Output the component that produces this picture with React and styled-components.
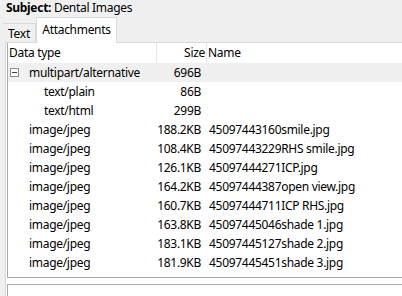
import React from 'react';
import styled, { createGlobalStyle } from 'styled-components';

const GlobalStyle = createGlobalStyle`
  html, body {
    margin: 0;
    padding: 0;
    background: #f0f0f0;
    overflow: hidden;
  }
  body {
    font-family: 'Noto Sans', 'Open Sans', sans-serif;
    font-size: 12px;
    letter-spacing: -0.3px;
    color: #000000;
  }
`;

const attachments = [
  { type: 'multipart/alternative', size: '696B', name: '', level: 0, toggle: true, hover: true },
  { type: 'text/plain', size: '86B', name: '', level: 1 },
  { type: 'text/html', size: '299B', name: '', level: 1 },
  { type: 'image/jpeg', size: '188.2KB', name: '45097443160smile.jpg', level: 0 },
  { type: 'image/jpeg', size: '108.4KB', name: '45097443229RHS smile.jpg', level: 0 },
  { type: 'image/jpeg', size: '126.1KB', name: '45097444271ICP.jpg', level: 0 },
  { type: 'image/jpeg', size: '164.2KB', name: '45097444387open view.jpg', level: 0 },
  { type: 'image/jpeg', size: '160.7KB', name: '45097444711ICP RHS.jpg', level: 0 },
  { type: 'image/jpeg', size: '163.8KB', name: '45097445046shade 1.jpg', level: 0 },
  { type: 'image/jpeg', size: '183.1KB', name: '45097445127shade 2.jpg', level: 0 },
  { type: 'image/jpeg', size: '181.9KB', name: '45097445451shade 3.jpg', level: 0 },
];

const App = function () {
  return (
    <Window>
      <GlobalStyle />
      <Subject>
        <b>Subject:</b> Dental Images
      </Subject>

      <TabBar>
        <Tab $width={33}>Text</Tab>
        <Tab $width={81} $active>Attachments</Tab>
      </TabBar>

      <Panel>
        <List>
          <HeadRow>
            <HeadCell>Data type</HeadCell>
            <HeadCell $align="right">Size</HeadCell>
            <HeadCell $last>Name</HeadCell>
          </HeadRow>

          {attachments.map((item, i) => (
            <Row key={i} $hover={item.hover}>
              <TypeCell $level={item.level}>
                <Expander>
                  {item.toggle && <ToggleBox />}
                </Expander>
                {item.type}
              </TypeCell>
              <SizeCell>{item.size}</SizeCell>
              <NameCell>{item.name}</NameCell>
            </Row>
          ))}
        </List>

        <Preview />
      </Panel>
    </Window>
  );
};

export default App;

const Window = styled.div`
  width: 402px;
  height: 296px;
  display: flex;
  flex-direction: column;
  overflow: hidden;
`;

const Subject = styled.div`
  height: 17px;
  line-height: 15px;
  padding-left: 6px;
  white-space: nowrap;

  b {
    font-weight: 700;
  }
`;

const TabBar = styled.div`
  height: 25px;
  display: flex;
  align-items: flex-end;
  padding-left: 3px;
`;

const Tab = styled.div`
  position: relative;
  z-index: ${(p) => (p.$active ? 1 : 0)};
  box-sizing: border-box;
  width: ${(p) => p.$width}px;
  height: ${(p) => (p.$active ? 26 : 19)}px;
  margin-bottom: ${(p) => (p.$active ? -1 : 0)}px;
  border: 1px solid #d9d9d9;
  border-bottom: none;
  border-left: ${(p) => (p.$active ? '1px solid #d9d9d9' : 'none')};
  background: ${(p) => (p.$active ? '#ffffff' : '#f0f0f0')};
  display: flex;
  align-items: center;
  justify-content: center;
  padding-bottom: ${(p) => (p.$active ? 3 : 0)}px;
  white-space: nowrap;
`;

const Panel = styled.div`
  flex: 1;
  margin-left: 5px;
  border-left: 1px solid #d9d9d9;
  border-top: 1px solid #d9d9d9;
  background: #ffffff;
  padding-left: 1px;
  display: flex;
  flex-direction: column;
`;

const List = styled.div`
  height: 234px;
  border-left: 1px solid #a9a9a9;
  border-bottom: 1px solid #a9a9a9;
  background: #ffffff;
`;

const columns = '149px 50px 1fr';

const HeadRow = styled.div`
  display: grid;
  grid-template-columns: ${columns};
  height: 20px;
`;

const HeadCell = styled.div`
  border-right: ${(p) => (p.$last ? 'none' : '1px solid #e5e5e5')};
  line-height: 19px;
  padding: 0 1px;
  text-align: ${(p) => p.$align || 'left'};
  white-space: nowrap;
`;

const Row = styled.div`
  display: grid;
  grid-template-columns: ${columns};
  height: 19px;
  line-height: 19px;
  background: ${(p) => (p.$hover ? '#f0f0f0' : '#ffffff')};
  white-space: nowrap;
`;

const TypeCell = styled.div`
  display: flex;
  align-items: center;
  padding-left: ${(p) => 2 + p.$level * 15}px;
`;

const Expander = styled.span`
  width: 19px;
  flex: none;
  display: flex;
  align-items: center;
`;

const ToggleBox = styled.span`
  position: relative;
  box-sizing: border-box;
  width: 9px;
  height: 9px;
  border: 1px solid #8c8c8c;
  background: #ffffff;

  &::after {
    content: '';
    position: absolute;
    left: 1px;
    right: 1px;
    top: 3px;
    height: 1px;
    background: #3c3c3c;
  }
`;

const SizeCell = styled.div`
  text-align: right;
  padding-right: 6px;
`;

const NameCell = styled.div`
  padding-left: 2px;
`;

const Preview = styled.div`
  flex: 1;
  margin-top: 6px;
  border-left: 1px solid #a9a9a9;
  border-top: 1px solid #a9a9a9;
  background: #ffffff;
`;
